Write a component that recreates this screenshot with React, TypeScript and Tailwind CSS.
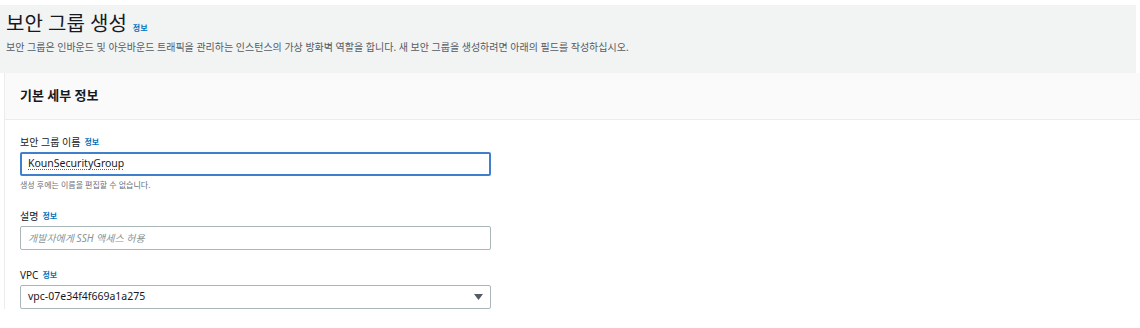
const FONT = '"Noto Sans", "Noto Sans CJK KR", sans-serif'

function Info() {
  return <span className="ml-1 text-[8px] font-bold text-[#0073bb]">정보</span>
}

function Label({ text }: { text: string }) {
  return (
    <div className="flex items-center text-[10px] text-[#16191f] leading-[14px]">
      {text}
      <Info />
    </div>
  )
}

export default function App() {
  return (
    <div className="w-[1140px] h-[328px] bg-white overflow-hidden pt-[5px]" style={{ fontFamily: FONT }}>
      {/* Header */}
      <div className="bg-[#f2f3f3] mr-[4px] h-[68px] px-[6px] pt-[5px]">
        <div className="flex items-baseline">
          <h1 className="text-[20px] leading-[28px] text-[#16191f]">보안 그룹 생성</h1>
          <span className="ml-[6px] text-[8px] font-bold text-[#0073bb]">정보</span>
        </div>
        <p className="mt-[2px] text-[10px] leading-[14px] text-[#545b64]">
          보안 그룹은 인바운드 및 아웃바운드 트래픽을 관리하는 인스턴스의 가상 방화벽 역할을 합니다. 새 보안 그룹을 생성하려면 아래의 필드를 작성하십시오.
        </p>
      </div>

      {/* Card */}
      <div className="ml-[4px] border-l border-[#eaeded] bg-white">
        <div className="h-[47px] bg-[#fafafa] border-b border-[#eaeded] flex items-center px-[15px] pb-[1px]">
          <h2 className="text-[13px] font-bold text-[#16191f]">기본 세부 정보</h2>
        </div>
        <div className="px-[15px] pt-[15px]">
          <Label text="보안 그룹 이름" />
          <div className="mt-[3px] w-[471px] h-[24px] border-2 border-[#3f7fcc] rounded-[2px] flex items-center px-[6px]">
            <span className="text-[10.5px] text-[#16191f] underline decoration-dotted decoration-[#d13212] underline-offset-2">KounSecurityGroup</span>
          </div>
          <div className="mt-[3px] text-[8px] leading-[12px] text-[#687078]">생성 후에는 이름을 편집할 수 없습니다.</div>

          <div className="mt-[18px]">
            <Label text="설명" />
          </div>
          <div className="mt-[3px] w-[471px] h-[24px] border border-[#aab7b8] rounded-[2px] flex items-center px-[7px]">
            <span className="text-[10px] italic text-[#879596]">개발자에게 SSH 액세스 허용</span>
          </div>

          <div className="mt-[18px]">
            <Label text="VPC" />
          </div>
          <div className="mt-[3px] w-[471px] h-[24px] border border-[#aab7b8] rounded-[2px] flex items-center justify-between px-[7px]">
            <span className="text-[10.5px] text-[#16191f]">vpc-07e34f4f669a1a275</span>
            <svg width="9" height="6" viewBox="0 0 9 6"><path d="M0 0h9L4.5 6z" fill="#545b64" /></svg>
          </div>
        </div>
      </div>
    </div>
  )
}
